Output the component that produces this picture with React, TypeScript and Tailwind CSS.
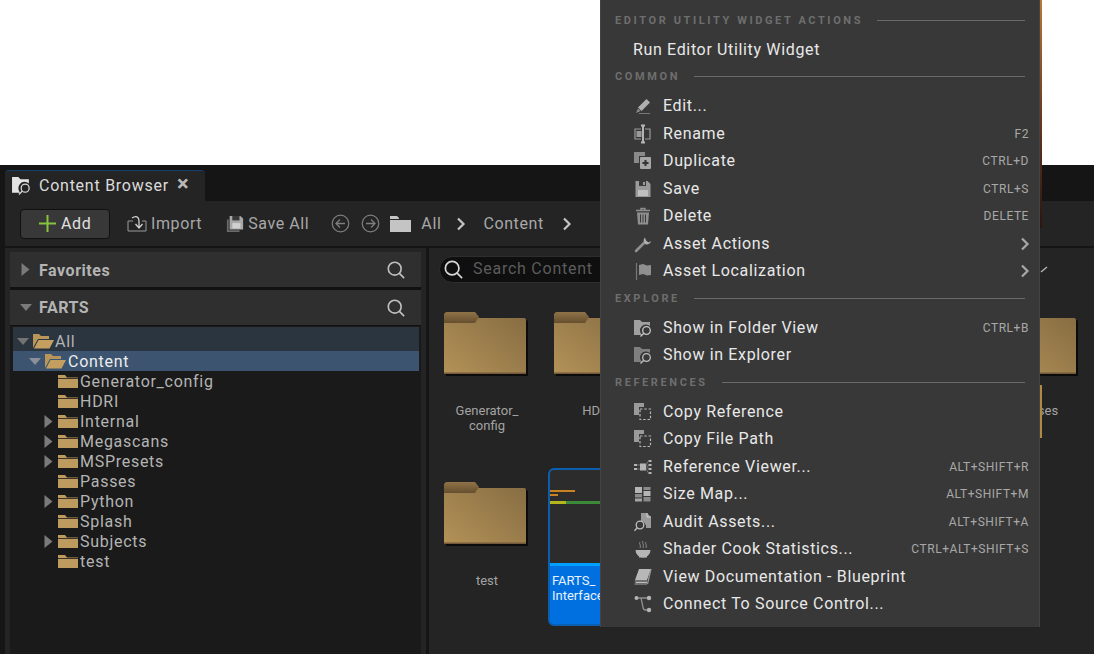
import React from "react";

const font = { fontFamily: "Roboto, 'Noto Sans', sans-serif" };

function Svg({ children, size = 20, box = 20, className = "" }: { children: React.ReactNode; size?: number; box?: number; className?: string }) {
  return (
    <svg width={size} height={size} viewBox={`0 0 ${box} ${box}`} className={className} fill="none">
      {children}
    </svg>
  );
}

const G = "#9a9a9a";

const icons: Record<string, React.ReactNode> = {
  edit: (
    <Svg>
      <path d="M5 11.500L13.500 3l3.500 3.500L8.500 15z" fill="#b0b0b0" />
      <path d="M5 12.500l2.500 2.500-4.500 2z" fill="#8c8c8c" />
      <path d="M6 17.500h11" stroke="#777" strokeWidth="1" />
    </Svg>
  ),
  rename: (
    <Svg>
      <path d="M8 5H2v10h6M12 5h5v10h-5" stroke={G} strokeWidth="1.2" />
      <rect x="3.500" y="7" width="5" height="6" fill={G} />
      <path d="M8 1.500h4M8 18.500h4M10 2v16" stroke="#b5b5b5" strokeWidth="2" />
    </Svg>
  ),
  duplicate: (
    <Svg>
      <path d="M1 1h11v4H6v7H1z" fill="#8a8a8a" />
      <rect x="7" y="6" width="11" height="12" fill="#a6a6a6" rx="1" />
      <path d="M12.500 9v6M9.500 12h6" stroke="#333" strokeWidth="2" />
    </Svg>
  ),
  save: (
    <Svg>
      <path d="M2.500 2h12l3 3v13h-15z" fill={G} />
      <rect x="6" y="2" width="7" height="5" fill="#3a3a3a" />
      <rect x="10" y="3" width="2" height="3" fill={G} />
      <rect x="5" y="11" width="10" height="6" fill="#c0c0c0" />
    </Svg>
  ),
  delete: (
    <Svg>
      <path d="M3 4.500h14M8 4V2.500h4V4" stroke="#8f8f8f" strokeWidth="1.4" />
      <path d="M4 6.500h12l-1 12H5z" fill="#8f8f8f" />
      <path d="M7.500 8.500v8M10 8.500v8M12.500 8.500v8" stroke="#3a3a3a" strokeWidth="1" />
    </Svg>
  ),
  wrench: (
    <Svg>
      <path d="M3 17l8-8" stroke="#8f8f8f" strokeWidth="2.600" strokeLinecap="round" />
      <path d="M12 3.500a4.300 4.300 0 0 0 1 7 4.300 4.300 0 0 0 5-3.500l-2.500 1.500-2.500-2z" fill="#b0b0b0" />
    </Svg>
  ),
  flag: (
    <Svg>
      <path d="M3.500 2v17" stroke="#777" strokeWidth="1.200" />
      <path d="M6 4l4-1 4 1.500 4-.5v10l-4 .5-4-1.500-4 1z" fill="#8f8f8f" />
    </Svg>
  ),
  explore: (
    <Svg>
      <path d="M1 2h6l2 2h8v4a6 6 0 0 0-8 9H1z" fill="#a0a0a0" />
      <circle cx="13.500" cy="12.500" r="3.800" stroke="#c8c8c8" strokeWidth="1.300" />
      <path d="M10.800 15.300l-3.300 3.200" stroke="#c8c8c8" strokeWidth="1.300" />
    </Svg>
  ),
  explore2: (
    <Svg>
      <path d="M1 2h6l2 2h8v4a6 6 0 0 0-8 9H1z" fill="#7f7f7f" />
      <circle cx="13.500" cy="12.500" r="3.800" stroke="#c0c0c0" strokeWidth="1.300" />
      <path d="M10.800 15.300l-3.300 3.200" stroke="#c0c0c0" strokeWidth="1.300" />
    </Svg>
  ),
  copy: (
    <Svg>
      <path d="M1 1h10v4H6v8H1z" fill="#9a9a9a" />
      <rect x="7" y="7" width="10.500" height="10.500" stroke="#b8b8b8" strokeWidth="1.200" strokeDasharray="2.500 1.800" />
    </Svg>
  ),
  refs: (
    <Svg>
      <rect x="7" y="6.500" width="6" height="7" fill="#b5b5b5" />
      <path d="M1 7h3v2H1zM1 11h3v2H1zM15.500 3h3v2h-3zM15.500 7h3v2h-3zM15.500 11h3v2h-3zM15.500 15h3v2h-3z" fill="#b5b5b5" />
      <path d="M4 8h3M4 12h3M13 8l2.500-4M13 9h2.500M13 11h2.500M13 12l2.500 4" stroke="#777" strokeWidth="1" />
    </Svg>
  ),
  sizemap: (
    <Svg>
      <rect x="2" y="3" width="7" height="6" fill="#b5b5b5" />
      <rect x="2" y="10" width="7" height="3.500" fill="#8a8a8a" />
      <rect x="2" y="14.500" width="7" height="3" fill="#a5a5a5" />
      <rect x="10.500" y="3" width="7" height="3" fill="#8a8a8a" />
      <rect x="10.500" y="7" width="7" height="5" fill="#b5b5b5" />
      <rect x="10.500" y="13" width="7" height="4.500" fill="#8a8a8a" />
    </Svg>
  ),
  audit: (
    <Svg>
      <path d="M8 1h6l4 4v11h-5a6 6 0 0 0-5-7z" fill="#9a9a9a" />
      <path d="M14 1v4h4" stroke="#cfcfcf" strokeWidth="1" />
      <circle cx="7" cy="13" r="3.800" stroke="#bdbdbd" strokeWidth="1.300" />
      <path d="M4.300 15.800L1.500 18.800" stroke="#bdbdbd" strokeWidth="1.300" />
    </Svg>
  ),
  shader: (
    <Svg>
      <path d="M2.500 11h15a7.500 7.500 0 0 1-15 0z" fill="#b5b5b5" />
      <rect x="6" y="17" width="8" height="1.500" fill="#b5b5b5" />
      <path d="M7 3c-1.500 2 1.500 3 0 6M10 2c-1.500 2 1.500 3 0 7M13 3c-1.500 2 1.500 3 0 6" stroke="#8a8a8a" strokeWidth="1" />
    </Svg>
  ),
  book: (
    <Svg>
      <path d="M6 2h12l-4 11H2z" fill="#b8b8b8" />
      <path d="M2 13h12v5H1.500z" fill="#6f6f6f" />
      <path d="M3 15.500h11" stroke="#bdbdbd" strokeWidth="1" />
      <path d="M18 2l-3.500 15" stroke="#9a9a9a" strokeWidth="1.200" />
    </Svg>
  ),
  scm: (
    <Svg>
      <circle cx="3.500" cy="4" r="2" fill="#b5b5b5" />
      <circle cx="16" cy="4" r="2.200" fill="#b5b5b5" />
      <circle cx="16" cy="16" r="2.200" fill="#b5b5b5" />
      <path d="M5 4h9M8 4l2 9a3 3 0 0 0 3 3h1" stroke="#909090" strokeWidth="1.300" />
    </Svg>
  ),
};

type Row =
  | { h: string }
  | { label: string; icon?: string; key2?: string; sub?: boolean; indent?: boolean };

const rows: Row[] = [
  { h: "EDITOR UTILITY WIDGET ACTIONS" },
  { label: "Run Editor Utility Widget", indent: true },
  { h: "COMMON" },
  { label: "Edit...", icon: "edit" },
  { label: "Rename", icon: "rename", key2: "F2" },
  { label: "Duplicate", icon: "duplicate", key2: "CTRL+D" },
  { label: "Save", icon: "save", key2: "CTRL+S" },
  { label: "Delete", icon: "delete", key2: "DELETE" },
  { label: "Asset Actions", icon: "wrench", sub: true },
  { label: "Asset Localization", icon: "flag", sub: true },
  { h: "EXPLORE" },
  { label: "Show in Folder View", icon: "explore", key2: "CTRL+B" },
  { label: "Show in Explorer", icon: "explore2" },
  { h: "REFERENCES" },
  { label: "Copy Reference", icon: "copy" },
  { label: "Copy File Path", icon: "copy" },
  { label: "Reference Viewer...", icon: "refs", key2: "ALT+SHIFT+R" },
  { label: "Size Map...", icon: "sizemap", key2: "ALT+SHIFT+M" },
  { label: "Audit Assets...", icon: "audit", key2: "ALT+SHIFT+A" },
  { label: "Shader Cook Statistics...", icon: "shader", key2: "CTRL+ALT+SHIFT+S" },
  { label: "View Documentation - Blueprint", icon: "book" },
  { label: "Connect To Source Control...", icon: "scm" },
];

function Chevron({ className = "" }: { className?: string }) {
  return (
    <svg width="10" height="14" viewBox="0 0 10 14" className={className} fill="none">
      <path d="M2 1.500L7.500 7 2 12.500" stroke="currentColor" strokeWidth="2.200" />
    </svg>
  );
}

function Menu() {
  return (
    <div className="absolute left-[600px] top-0 w-[440px] h-[627px] bg-[#383838] border-x border-[#444444] pt-[6px] pb-[10px]">
      {rows.map((r, i) =>
        "h" in r ? (
          <div key={i} className="h-[29px] flex items-center pl-[14px] pr-[14px] gap-[14px] pb-[1px]">
            <span className="text-[11px] font-bold tracking-[2.6px] text-[#6e6e6e] leading-none whitespace-nowrap">{r.h}</span>
            <div className="flex-1 h-px bg-[#6a6a6a]" />
          </div>
        ) : (
          <div key={i} className="h-[27.5px] flex items-center pr-[10px] pt-[2px]">
            {r.indent ? (
              <span className="pl-[32px] text-[16px] tracking-[0.65px] text-[#e8e8e8] whitespace-nowrap">{r.label}</span>
            ) : (
              <>
                <span className="w-[31px] ml-[32px] -mr-[1px] flex items-center shrink-0">{r.icon && icons[r.icon]}</span>
                <span className="text-[16px] tracking-[0.65px] text-[#e8e8e8] whitespace-nowrap">{r.label}</span>
              </>
            )}
            <div className="flex-1" />
            {r.key2 && <span className="text-[12px] text-[#a8a8a8] tracking-[0.55px] whitespace-nowrap">{r.key2}</span>}
            {r.sub && <Chevron className="text-[#a8a8a8] -mr-[1px]" />}
          </div>
        )
      )}
    </div>
  );
}

function Folder() {
  return (
    <svg width="84" height="64" viewBox="0 0 84 64" className="block">
      <defs>
        <linearGradient id="fg" x1="0" y1="1" x2="1" y2="0.1">
          <stop offset="0" stopColor="#b39257" />
          <stop offset="1" stopColor="#876d43" />
        </linearGradient>
        <linearGradient id="ft" x1="0" y1="0" x2="0" y2="1">
          <stop offset="0" stopColor="#8f7348" />
          <stop offset="1" stopColor="#664f2f" />
        </linearGradient>
      </defs>
      <path d="M2 8h80a2 2 0 0 1 2 2v54H2z" fill="#0b0b0b" />
      <path d="M0 4a4 4 0 0 1 4-4h25l6 6h45a2 2 0 0 1 2 2v54H0z" fill="url(#fg)" />
      <path d="M0 4a4 4 0 0 1 4-4h27l4 5-4 6H0z" fill="url(#ft)" />
      <rect x="0" y="60.500" width="82" height="1.500" fill="#73593a" />
    </svg>
  );
}

function TreeFolder({ open }: { open?: boolean }) {
  return open ? (
    <svg width="21" height="16" viewBox="0 0 21 16">
      <path d="M0 15V1h6l2 2h8v3H5z" fill="#b89559" />
      <path d="M5.500 7H21l-4.500 8.500H1z" fill="#c49f60" />
    </svg>
  ) : (
    <svg width="20" height="15" viewBox="0 0 20 15">
      <path d="M0 14V1h7l2 2.500h11V14z" fill="#bd9a5e" />
      <path d="M0 4.500h20" stroke="#1a1a1a" strokeWidth="0.800" />
    </svg>
  );
}

const Tri = ({ down, color = "#7a7a7a" }: { down?: boolean; color?: string }) => (
  <svg width="12" height="13" viewBox="0 0 12 13">
    {down ? <path d="M0 3h12L6 10z" fill={color} /> : <path d="M1.500 0v13L9.500 6.500z" fill={color} />}
  </svg>
);

const Search = ({ size = 18, color = "#c0c0c0" }: { size?: number; color?: string }) => (
  <svg width={size} height={size} viewBox="0 0 21 21" fill="none">
    <circle cx="9" cy="9" r="7.500" stroke={color} strokeWidth="1.900" />
    <path d="M14.500 14.500l5.500 5.500" stroke={color} strokeWidth="1.900" />
  </svg>
);

const tree = [
  { t: "Generator_config" },
  { t: "HDRI" },
  { t: "Internal", arrow: true },
  { t: "Megascans", arrow: true },
  { t: "MSPresets", arrow: true },
  { t: "Passes" },
  { t: "Python", arrow: true },
  { t: "Splash" },
  { t: "Subjects", arrow: true },
  { t: "test" },
];

function PanelHeader({ title, down }: { title: string; down?: boolean }) {
  return (
    <div className="h-[35px] shrink-0 bg-[#2f2f2f] flex items-center pl-[10px] pr-[16px]">
      <Tri down={down} />
      <span className={`ml-[7px] text-[16px] font-bold tracking-[0.55px] text-[#b4b4b4] ${down ? "" : "pt-[2px]"}`}>{title}</span>
      <div className="flex-1" />
      <Search />
    </div>
  );
}

function Cell({ lines }: { lines: string[] }) {
  return (
    <div className="w-[110px] h-[170px] shrink-0 flex flex-col">
      <Folder />
      <div className="mt-[27px] w-[86px] text-center text-[13px] leading-[15px] text-[#a3a3a3]">
        {lines.map((l) => (
          <div key={l}>{l}</div>
        ))}
      </div>
    </div>
  );
}

function Thumb() {
  return (
    <div className="w-[110px] h-[158px] -mt-[14px] -ml-[6px] rounded-[6px] border-2 border-[#0a5fb0] bg-[#0070e0] overflow-hidden flex flex-col">
      <div className="h-[93px] bg-[#2c2c2c] pt-[20px]">
        <div className="h-[2px] w-[25px] bg-[#c9821f]" />
        <div className="h-[2px] w-[8px] mt-[2px] bg-[#c9821f]" />
        <div className="flex h-[3px] mt-[5px]">
          <div className="w-[16px] bg-[#b5b51e]" />
          <div className="flex-1 bg-[#3a8a3a]" />
        </div>
      </div>
      <div className="h-[3px] bg-[#00a0ff]" />
      <div className="pl-[2px] pt-[7px] text-[13px] leading-[15px] text-[#e8f2ff]">
        <div>FARTS_</div>
        <div>Interface</div>
      </div>
    </div>
  );
}

export default function App() {
  return (
    <div className="relative w-[1094px] h-[654px] overflow-hidden bg-[#151515]" style={font}>
      <div className="h-[165px] bg-white" />
      {/* tab bar */}
      <div className="h-[36px] bg-[#151515] flex items-end pl-[5px]">
        <div className="w-[200px] h-[31px] bg-[#242424] rounded-t-[4px] border-t border-[#15406a] flex items-center pl-[6px] pb-[1px]">
          <svg width="21" height="21" viewBox="0 0 20 20" fill="none" className="shrink-0">
            <path d="M1 2h6l2 2h8v4a6 6 0 0 0-8 9H1z" fill="#e4e4e4" />
            <circle cx="13.500" cy="12.500" r="3.800" stroke="#d8d8d8" strokeWidth="1.200" />
            <path d="M10.800 15.300l-3.300 3.200" stroke="#d8d8d8" strokeWidth="1.200" />
          </svg>
          <span className="ml-[7px] text-[16px] tracking-[0.75px] text-[#dcdcdc] whitespace-nowrap">Content Browser</span>
          <span className="ml-[8px] text-[#b8b8b8] text-[22px] font-bold leading-none -mt-[4px]">×</span>
        </div>
      </div>
      {/* toolbar */}
      <div className="ml-[5px] h-[45px] bg-[#242424] flex items-center pl-[15px] text-[16px] tracking-[0.6px] text-[#a8a8a8]">
        <div className="w-[90px] h-[30px] rounded-[4px] bg-[#383838] border border-[#101010] flex items-center pl-[18px] gap-[5px] text-[#e0e0e0]">
          <svg width="17" height="17" viewBox="0 0 17 17">
            <path d="M8.500 0v17M0 8.500h17" stroke="#86c33e" strokeWidth="2" />
          </svg>
          Add
        </div>
        <svg width="20" height="20" viewBox="0 0 20 20" fill="none" className="ml-[17px]">
          <path d="M6 7H1v10h18V7h-4" stroke="#9a9a9a" strokeWidth="1" />
          <path d="M5 4c4-3 7-1 7 3v6M8.500 10l3.500 4 3.500-4" stroke="#d0d0d0" strokeWidth="1.300" />
        </svg>
        <span className="ml-[4px]">Import</span>
        <svg width="18" height="18" viewBox="0 0 20 20" className="ml-[24px]">
          <path d="M1 5v14h14v-2H3V5z" fill="#6a6a6a" />
          <path d="M4 1h12l3 3v12H4z" fill="#a8a8a8" />
          <rect x="7" y="1" width="8" height="5" fill="#383838" />
          <rect x="7" y="9" width="9" height="6" fill="#d0d0d0" />
        </svg>
        <span className="ml-[4px]">Save All</span>
        <svg width="19" height="19" viewBox="0 0 19 19" fill="none" className="ml-[22px]">
          <circle cx="9.500" cy="9.500" r="8.300" stroke="#7e7e7e" strokeWidth="1.200" />
          <path d="M14 9.500H5.500M9 5.500l-4 4 4 4" stroke="#7e7e7e" strokeWidth="1.300" />
        </svg>
        <svg width="19" height="19" viewBox="0 0 19 19" fill="none" className="ml-[11px]">
          <circle cx="9.500" cy="9.500" r="8.300" stroke="#7e7e7e" strokeWidth="1.200" />
          <path d="M5 9.500h8.500M10 5.500l4 4-4 4" stroke="#7e7e7e" strokeWidth="1.300" />
        </svg>
        <svg width="21" height="16" viewBox="0 0 21 16" className="ml-[10px]">
          <path d="M0 3V0h7l2 2v1zM0 4h21v12H0z" fill="#c4c4c4" />
        </svg>
        <span className="ml-[10px]">All</span>
        <Chevron className="ml-[15px] text-[#c4c4c4]" />
        <span className="ml-[17px]">Content</span>
        <Chevron className="ml-[18px] text-[#c4c4c4]" />
      </div>
      <div className="h-[2px] bg-[#151515]" />
      {/* body */}
      <div className="h-[406px] flex pl-[5px]">
        <div className="w-[421px] shrink-0 bg-[#242424] pl-[5px] pr-[5px] pt-[4px] flex flex-col">
          <PanelHeader title="Favorites" />
          <div className="h-[3px] shrink-0 bg-[#111111]" />
          <PanelHeader title="FARTS" down />
          <div className="flex-1 bg-[#1a1a1a] pt-[1px] pl-[3px] pr-[2px] border-t border-[#111111] text-[16px] tracking-[0.72px]">
            <div className="h-[24px] pt-[4px] bg-[#2b3540] flex items-center text-[#b4b4b4]">
              <span className="ml-[4px] flex"><Tri down color="#737373" /></span>
              <span className="ml-[4px] flex"><TreeFolder open /></span>
              <span className="ml-[1px] pt-[2px]">All</span>
            </div>
            <div className="h-[20px] bg-[#3c546f] flex items-center text-[#ededed]">
              <span className="ml-[16px] flex"><Tri down color="#8a9099" /></span>
              <span className="ml-[4px] flex"><TreeFolder open /></span>
              <span className="ml-[2px] pt-[2px]">Content</span>
            </div>
            {tree.map((n) => (
              <div key={n.t} className="h-[20px] flex items-center text-[#b4b4b4]">
                <span className="w-[45px] pl-[30px] flex shrink-0">{n.arrow && <Tri />}</span>
                <TreeFolder />
                <span className="ml-[2px] pt-[2px]">{n.t}</span>
              </div>
            ))}
          </div>
        </div>
        <div className="w-[3px] shrink-0 bg-[#151515]" />
        <div className="flex-1 min-w-0 bg-[#242424] pl-[10px] pt-[8px]">
          <div className="flex items-center h-[27px] w-[300px] rounded-full bg-[#0f0f0f] border border-[#2e2e2e] pl-[4px]">
            <Search size={19} color="#d8d8d8" />
            <span className="ml-[10px] pb-[2px] text-[16px] tracking-[0.75px] text-[#5c5c5c]">Search Content</span>
          </div>
          <div className="ml-[5px] mt-[29px] flex">
            <Cell lines={["Generator_", "config"]} />
            <Cell lines={["HDRI"]} />
            <Cell lines={[]} />
            <Cell lines={[]} />
            <Cell lines={[]} />
            <Cell lines={["Passes"]} />
          </div>
          <div className="ml-[5px] flex">
            <Cell lines={["test"]} />
            <Thumb />
          </div>
        </div>
      </div>
      {/* slivers of the selected asset and view-options caret that peek out past the menu */}
      <div className="absolute left-[1040px] top-0 w-[1.5px] h-[228px] bg-gradient-to-b from-[#b87a38] via-[#6a3a22] to-[#2a1510]" />
      <div className="absolute left-[1040px] top-[385px] w-[1.5px] h-[53px] bg-[#b08a40]" />
      <svg width="8" height="7" viewBox="0 0 8 7" fill="none" className="absolute left-[1040px] top-[266px]">
        <path d="M1 6L7 1" stroke="#b0b0b0" strokeWidth="1.500" />
      </svg>
      <Menu />
    </div>
  );
}
